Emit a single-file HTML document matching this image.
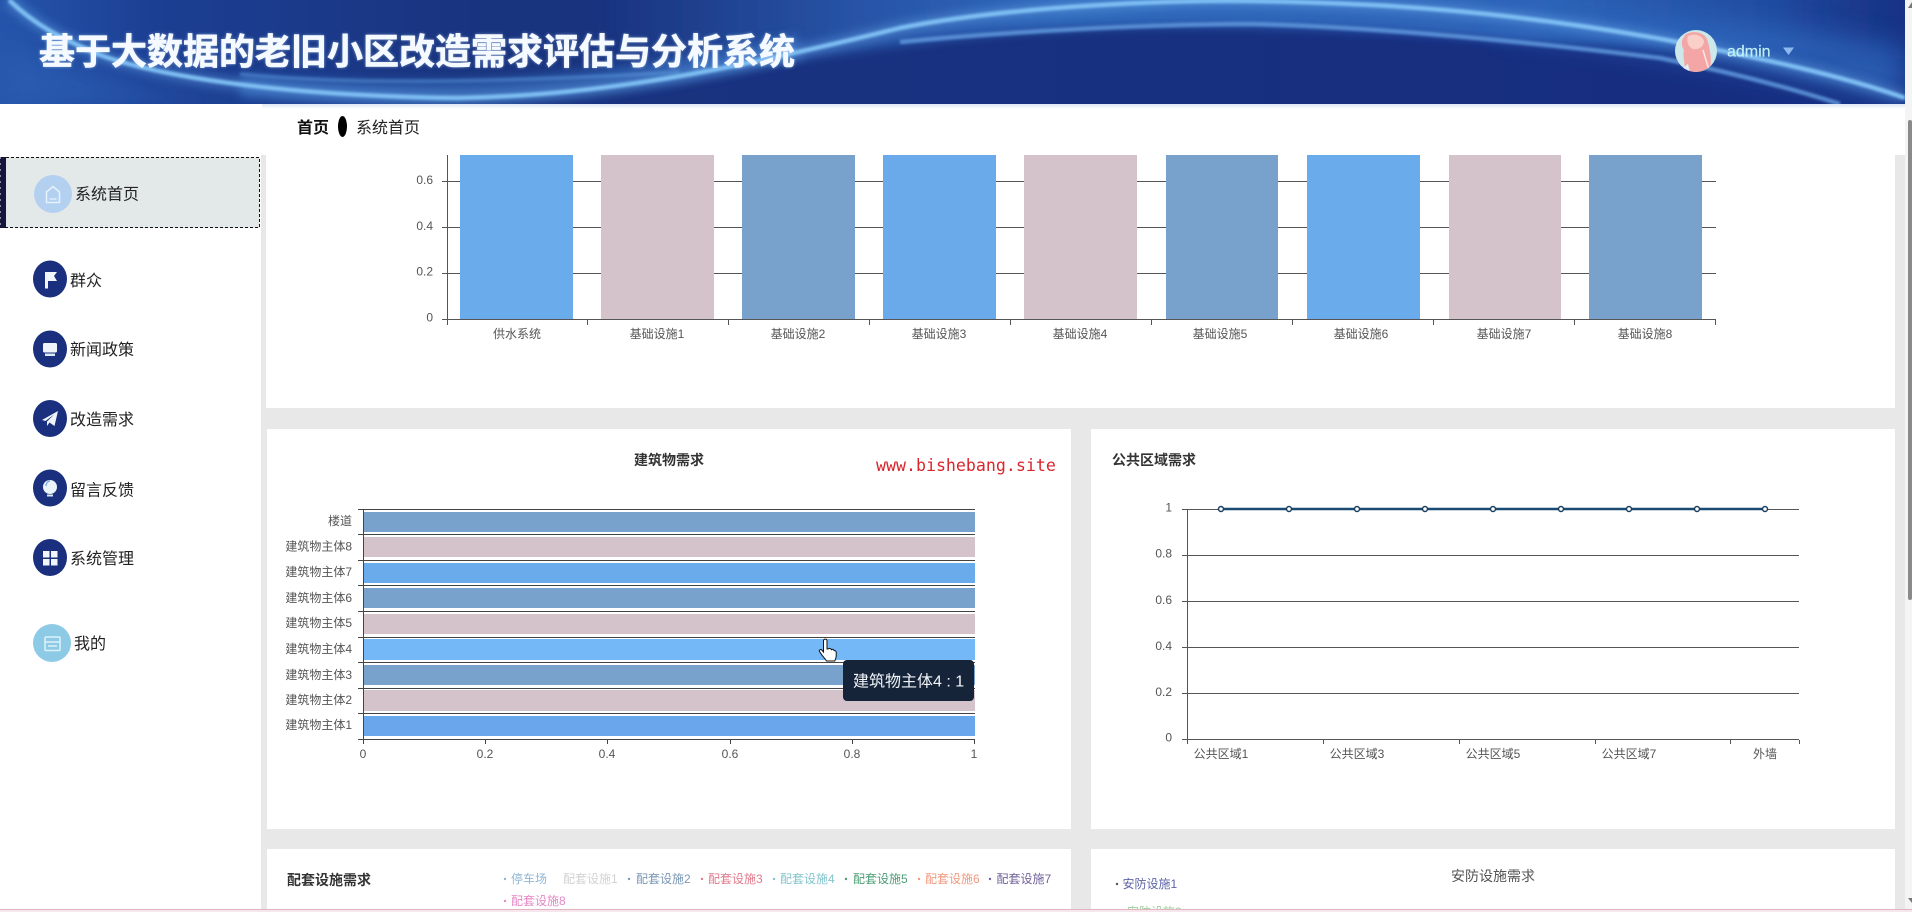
<!DOCTYPE html>
<html lang="zh"><head><meta charset="utf-8"><title>基于大数据的老旧小区改造需求评估与分析系统</title>
<style>
html,body{margin:0;padding:0;width:1912px;height:912px;overflow:hidden;background:#fff;font-family:"Liberation Sans","Noto Sans CJK SC",sans-serif}
.a{position:absolute}
.card{position:absolute;background:#fff}
svg text{font-family:"Liberation Sans","Noto Sans CJK SC",sans-serif}
</style></head><body>
<div class="a" style="left:261px;top:155px;width:644px;height:757px;background:#e8e8e8"></div>
<div class="a" style="left:1895px;top:155px;width:10px;height:757px;background:#e8e8e8"></div>
<div class="card" style="left:266px;top:104px;width:1629px;height:304px"></div>
<div class="a" style="left:266px;top:408px;width:1629px;height:504px;background:#e8e8e8"></div>
<div class="card" style="left:267px;top:429px;width:804px;height:400px"></div>
<div class="card" style="left:1091px;top:429px;width:804px;height:400px"></div>
<div class="card" style="left:267px;top:849px;width:804px;height:63px"></div>
<div class="card" style="left:1091px;top:849px;width:804px;height:63px"></div>
<div class="a" style="left:262px;top:104px;width:1643px;height:5px;background:linear-gradient(#dfe7f5,#fff)"></div>

<svg class="a" style="left:0;top:0" width="1912" height="912" viewBox="0 0 1912 912" xmlns="http://www.w3.org/2000/svg">
<defs>
<linearGradient id="hb" x1="0" x2="1" y1="0" y2="0"><stop offset="0" stop-color="#2455ab"/><stop offset=".08" stop-color="#1c3f93"/><stop offset=".25" stop-color="#19347f"/><stop offset=".7" stop-color="#182f80"/><stop offset="1" stop-color="#162e80"/></linearGradient>
<linearGradient id="hl" gradientUnits="userSpaceOnUse" x1="600" y1="0" x2="1905" y2="0"><stop offset="0" stop-color="#2c60b4" stop-opacity="0"/><stop offset=".2" stop-color="#2c60b4" stop-opacity=".75"/><stop offset=".35" stop-color="#2f67ba"/><stop offset=".72" stop-color="#2d64b8"/><stop offset=".9" stop-color="#2252a8" stop-opacity=".8"/><stop offset="1" stop-color="#1a3a8e" stop-opacity=".4"/></linearGradient>
<filter id="b1" x="-5%" y="-100%" width="110%" height="300%"><feGaussianBlur stdDeviation="1.200"/></filter>
<filter id="b2" x="-5%" y="-100%" width="110%" height="300%"><feGaussianBlur stdDeviation="5"/></filter>
<filter id="b3" x="-20%" y="-100%" width="140%" height="300%"><feGaussianBlur stdDeviation="14"/></filter>
<filter id="ts" x="-5%" y="-30%" width="110%" height="160%"><feGaussianBlur stdDeviation="1.500"/></filter>
<clipPath id="hc"><rect x="0" y="0" width="1905" height="104"/></clipPath>
<clipPath id="av"><circle cx="1696" cy="51" r="21"/></clipPath>
<clipPath id="pg"><rect x="0" y="0" width="1912" height="909"/></clipPath>
</defs>

<!-- header -->
<g clip-path="url(#hc)">
<rect width="1905" height="104" fill="url(#hb)"/>
<path d="M600 -20H1905V60C1800 45 1650 48 1500 40C1350 26 1150 20 1000 34C900 42 750 70 600 80Z" fill="url(#hl)" filter="url(#b2)"/>
<path d="M0 40C60 70 130 90 260 102L0 110Z" fill="#2a5db2" opacity=".8" filter="url(#b3)"/>
<path d="M1500 30C1620 40 1760 70 1905 100V50C1750 20 1650 10 1500 14Z" fill="#2e68bd" opacity=".8" filter="url(#b3)"/>
<path d="M240 86C420 102 600 92 800 46" stroke="#3f7fcf" stroke-width="24" fill="none" opacity=".5" filter="url(#b2)"/>
<path d="M240 74C340 84 480 84 680 72" stroke="#5d9cdf" stroke-width="4" fill="none" opacity=".45" filter="url(#b1)"/>
<path d="M9 0C35 25 60 38 100 55C170 80 300 96 457 98C600 96 730 70 900 28C1000 8 1150 0 1250 1C1380 3 1500 10 1667 40C1760 58 1840 75 1905 98" stroke="#6aa8ea" stroke-width="11" fill="none" opacity=".45" filter="url(#b2)"/>
<path d="M9 0C35 25 60 38 100 55C170 80 300 96 457 98C600 96 730 70 900 28C1000 8 1150 0 1250 1C1380 3 1500 10 1667 40C1760 58 1840 75 1905 98" stroke="#7fc0f4" stroke-width="4.500" fill="none" filter="url(#b1)"/>
<path d="M900 42C1000 32 1150 24 1250 24C1350 26 1500 38 1660 58C1730 72 1790 88 1840 104" stroke="#6199dd" stroke-width="4.500" fill="none" opacity=".85" filter="url(#b1)"/>
</g>
<text x="39" y="64" font-size="36" font-weight="700" fill="#cfe8ff" opacity=".6" filter="url(#ts)">基于大数据的老旧小区改造需求评估与分析系统</text>
<text x="39" y="64" font-size="36" font-weight="700" fill="#f4faff" stroke="#f4faff" stroke-width=".6">基于大数据的老旧小区改造需求评估与分析系统</text>

<!-- avatar -->
<g clip-path="url(#av)">
<rect x="1675" y="30" width="42" height="42" fill="#cde8ea"/>
<path d="M1686 34C1694 30 1706 32 1708 42C1710 50 1712 60 1710 68C1704 74 1692 74 1684 70C1686 62 1682 58 1684 50C1680 44 1682 38 1686 34Z" fill="#f4a6a6"/>
<path d="M1688 36C1694 33 1702 35 1704 41C1704 47 1698 50 1693 49C1688 47 1686 41 1688 36Z" fill="#f9cfc8"/>
<path d="M1703 50L1709 70" stroke="#fbe6e0" stroke-width="1.500"/>
<path d="M1680 70L1690 72L1688 64Z" fill="#e6ecf8"/>
</g>
<text x="1727" y="56.500" font-size="16" fill="#bff0f5" stroke="#bff0f5" stroke-width=".2">admin</text>
<path d="M1783 47.500H1794L1788.500 55Z" fill="#8db8f0"/>

<!-- scrollbar -->
<rect x="1905" y="0" width="7" height="912" fill="#f4f4f4"/>
<path d="M1908 8L1912 2V8Z" fill="#777"/>
<rect x="1908" y="120" width="4" height="480" rx="2" fill="#8a8a8a"/>
<path d="M1908 898H1912V903Z" fill="#777"/>

<!-- breadcrumb -->
<text x="297" y="133" font-size="16" font-weight="700" fill="#111">首页</text>
<ellipse cx="342.500" cy="126.500" rx="4.500" ry="10.500" fill="#000"/>
<text x="356" y="133" font-size="16" fill="#222">系统首页</text>

<!-- sidebar -->
<rect x="0" y="157" width="6" height="71" fill="#15163c"/>
<rect x="6" y="157" width="254" height="71" fill="#e3e8e8"/>
<path d="M6 157.500H259.500V227.500H6" fill="none" stroke="#111" stroke-width="1" stroke-dasharray="3 2"/>
<path d="M0 157V228" stroke="#fff" stroke-width="1" stroke-dasharray="2 4"/>
<circle cx="53" cy="194" r="19" fill="#b4d0f0"/>
<path d="M46.500 192L53 186.500L59.500 192V202.500H46.500Z" fill="none" stroke="#e4f2fc" stroke-width="1.500"/>
<path d="M49.500 199H56.500" stroke="#e4f2fc" stroke-width="1.300"/>
<text x="75" y="199.500" font-size="16" fill="#222">系统首页</text>

<g fill="#1a2f7d">
<ellipse cx="50" cy="279" rx="17" ry="18.500"/>
<ellipse cx="50" cy="349" rx="17" ry="18.500"/>
<ellipse cx="50" cy="418.500" rx="17" ry="18.500"/>
<ellipse cx="50" cy="488" rx="17" ry="18.500"/>
<ellipse cx="50" cy="557.500" rx="17" ry="18.500"/>
</g>
<path d="M45 272H57L54 276L57 281H48V288.500H45Z" fill="#f0f6fb"/>
<path d="M44.500 343H55.500Q57 343 57 344.500V351Q57 352.500 55.500 352.500H44.500Q43 352.500 43 351V344.500Q43 343 44.500 343Z" fill="#eef4fa"/>
<rect x="45" y="353.500" width="10" height="2.500" fill="#dce8f4"/>
<path d="M42 420L58 411L54.500 426L49.500 422.500L47 426V421.500L54 414.500L45.500 421Z" fill="#eef4fa"/>
<circle cx="50" cy="487" r="7" fill="#eaf2fa"/>
<path d="M46 486C46 483 48 481 50 481" stroke="#6f9fdc" stroke-width="1.200" fill="none"/>
<rect x="47" y="494.500" width="6" height="2" fill="#dde8f4"/>
<g fill="#f0f6fb"><rect x="43" y="551" width="6.500" height="6.500"/><rect x="51" y="551" width="6.500" height="6.500"/><rect x="43" y="559" width="6.500" height="6.500"/><rect x="51" y="559" width="6.500" height="6.500"/></g>
<ellipse cx="52" cy="643" rx="19" ry="19" fill="#8ccae6"/>
<rect x="45" y="637" width="15" height="13.500" rx="1" fill="none" stroke="#dff2f8" stroke-width="1.500"/>
<path d="M45 642H60M48 646H57" stroke="#dff2f8" stroke-width="1.500"/>
<g font-size="16" fill="#222">
<text x="70" y="286">群众</text>
<text x="70" y="355">新闻政策</text>
<text x="70" y="425">改造需求</text>
<text x="70" y="495.500">留言反馈</text>
<text x="70" y="564">系统管理</text>
<text x="74" y="649">我的</text>
</g>

<!-- top chart -->
<g stroke="#555" stroke-width="1" fill="none" shape-rendering="crispEdges">
<path d="M442 181.500H1716M442 227.500H1716M442 273.500H1716"/>
<path d="M447.500 155V325M442 319.500H1716"/>
<path d="M587.500 320V325M728.500 320V325M869.500 320V325M1010.500 320V325M1151.500 320V325M1292.500 320V325M1433.500 320V325M1574.500 320V325M1715.500 320V325"/>
</g>
<g>
<rect x="460" y="155" width="113" height="164" fill="#6aabeb"/>
<rect x="601" y="155" width="113" height="164" fill="#d5c3cb"/>
<rect x="742" y="155" width="113" height="164" fill="#78a1cb"/>
<rect x="883" y="155" width="113" height="164" fill="#6aa9ea"/>
<rect x="1024" y="155" width="113" height="164" fill="#d5c3cb"/>
<rect x="1166" y="155" width="112" height="164" fill="#78a1cb"/>
<rect x="1307" y="155" width="113" height="164" fill="#6aabeb"/>
<rect x="1449" y="155" width="112" height="164" fill="#d5c3cb"/>
<rect x="1589" y="155" width="113" height="164" fill="#78a1cb"/>
</g>
<g font-size="12" fill="#555" text-anchor="end">
<text x="433" y="184">0.6</text><text x="433" y="230">0.4</text><text x="433" y="275.500">0.2</text><text x="433" y="321.500">0</text>
</g>
<g font-size="12" fill="#555" text-anchor="middle">
<text x="517" y="338">供水系统</text><text x="657" y="338">基础设施1</text><text x="798" y="338">基础设施2</text><text x="939" y="338">基础设施3</text><text x="1080" y="338">基础设施4</text><text x="1220" y="338">基础设施5</text><text x="1361" y="338">基础设施6</text><text x="1504" y="338">基础设施7</text><text x="1645" y="338">基础设施8</text>
</g>

<!-- bar chart -->
<text x="669" y="465" font-size="14" font-weight="700" fill="#333" text-anchor="middle">建筑物需求</text>
<text x="876" y="471" font-size="16.600" fill="#d8262c" style="font-family:'DejaVu Sans Mono','Liberation Mono',monospace">www.bishebang.site</text>
<g stroke="#444" stroke-width="1" fill="none" shape-rendering="crispEdges">
<path d="M358 509.500H975M358 534.500H975M358 560.500H975M358 585.500H975M358 611.500H975M358 637.500H975M358 662.500H975M358 688.500H975M358 713.500H975M358 739.500H975"/>
<path d="M363.500 509V744M485.500 740V744M607.500 740V744M730.500 740V744M852.500 740V744M974.500 740V744"/>
</g>
<g>
<rect x="364" y="512" width="611" height="20" fill="#78a1cb"/>
<rect x="364" y="537" width="611" height="20" fill="#d5c3cb"/>
<rect x="364" y="563" width="611" height="20" fill="#6aabeb"/>
<rect x="364" y="588" width="611" height="20" fill="#78a1cb"/>
<rect x="364" y="614" width="611" height="20" fill="#d5c3cb"/>
<rect x="364" y="639" width="611" height="21" fill="#74b8f8"/>
<rect x="364" y="665" width="611" height="20" fill="#78a1cb"/>
<rect x="364" y="690" width="611" height="21" fill="#d5c3cb"/>
<rect x="364" y="716" width="611" height="20" fill="#6aa6ec"/>
</g>
<g font-size="12" fill="#555" text-anchor="end">
<text x="352" y="525">楼道</text><text x="352" y="550.500">建筑物主体8</text><text x="352" y="576">建筑物主体7</text><text x="352" y="602">建筑物主体6</text><text x="352" y="627">建筑物主体5</text><text x="352" y="653">建筑物主体4</text><text x="352" y="679">建筑物主体3</text><text x="352" y="704">建筑物主体2</text><text x="352" y="729">建筑物主体1</text>
</g>
<g font-size="12" fill="#555" text-anchor="middle">
<text x="363" y="758">0</text><text x="485" y="758">0.2</text><text x="607" y="758">0.4</text><text x="730" y="758">0.6</text><text x="852" y="758">0.8</text><text x="974" y="758">1</text>
</g>
<rect x="843" y="660" width="131" height="41" rx="4" fill="#16243a"/>
<text x="853" y="686.500" font-size="16" fill="#f2f5f8">建筑物主体4 : 1</text>
<path d="M823.500 641C823.500 638.500 827 638.500 827 641V649L828 649C829 648 830.800 648 831.300 649.700C832.300 649 833.800 649.300 834.200 650.700C835.200 650.300 836.200 651 836.200 652.300V656C836.200 658 835.300 659 834.800 661H826.500C825.500 659 824 657.800 822 655.200L819.500 651.500C818.700 650 820.700 648.800 821.800 650L823.500 652Z" fill="#fff" stroke="#111" stroke-width="1"/>

<!-- line chart -->
<text x="1112" y="465" font-size="14" font-weight="700" fill="#333">公共区域需求</text>
<g stroke="#555" stroke-width="1" fill="none" shape-rendering="crispEdges">
<path d="M1182 509.500H1799M1182 555.500H1799M1182 601.500H1799M1182 647.500H1799M1182 693.500H1799"/>
<path d="M1187.500 509V744M1182 739.500H1799M1323.500 740V744M1459.500 740V744M1595.500 740V744M1730.500 740V744M1799.500 740V744"/>
</g>
<path d="M1221 509H1765" stroke="#1a4a72" stroke-width="2.500"/>
<g fill="#fff" stroke="#1c3f60" stroke-width="1.500">
<circle cx="1221" cy="509" r="2.500"/><circle cx="1289" cy="509" r="2.500"/><circle cx="1357" cy="509" r="2.500"/><circle cx="1425" cy="509" r="2.500"/><circle cx="1493" cy="509" r="2.500"/><circle cx="1561" cy="509" r="2.500"/><circle cx="1629" cy="509" r="2.500"/><circle cx="1697" cy="509" r="2.500"/><circle cx="1765" cy="509" r="2.500"/>
</g>
<g font-size="12" fill="#555" text-anchor="end">
<text x="1172" y="511.500">1</text><text x="1172" y="557.500">0.8</text><text x="1172" y="604">0.6</text><text x="1172" y="650">0.4</text><text x="1172" y="696">0.2</text><text x="1172" y="741.500">0</text>
</g>
<g font-size="12" fill="#555" text-anchor="middle">
<text x="1221" y="758">公共区域1</text><text x="1357" y="758">公共区域3</text><text x="1493" y="758">公共区域5</text><text x="1629" y="758">公共区域7</text><text x="1765" y="758">外墙</text>
</g>

<!-- bottom cards -->
<g clip-path="url(#pg)">
<text x="287" y="885" font-size="14" font-weight="700" fill="#333">配套设施需求</text>
<g font-size="12">
<text x="511" y="883" fill="#8fb6d6">停车场</text>
<text x="563" y="883" fill="#d2d2d2">配套设施1</text>
<text x="636" y="883" fill="#7a98b4">配套设施2</text>
<text x="708" y="883" fill="#e07a8c">配套设施3</text>
<text x="780" y="883" fill="#83c4cc">配套设施4</text>
<text x="853" y="883" fill="#4c9c74">配套设施5</text>
<text x="925" y="883" fill="#f2997e">配套设施6</text>
<text x="996.500" y="883" fill="#71629a">配套设施7</text>
<text x="511" y="905" fill="#e488c6">配套设施8</text>
</g>
<g>
<circle cx="505" cy="879" r="1.200" fill="#8fb6d6"/><circle cx="629" cy="879" r="1.200" fill="#7a98b4"/><circle cx="702" cy="879" r="1.200" fill="#e07a8c"/><circle cx="774" cy="879" r="1.200" fill="#83c4cc"/><circle cx="846" cy="879" r="1.200" fill="#4c9c74"/><circle cx="919" cy="879" r="1.200" fill="#f2997e"/><circle cx="990" cy="879" r="1.200" fill="#71629a"/><circle cx="505" cy="901" r="1.200" fill="#e488c6"/>
</g>
<text x="1493" y="881" font-size="14" fill="#555" text-anchor="middle">安防设施需求</text>
<circle cx="1117" cy="884" r="1.200" fill="#555"/>
<text x="1122.500" y="888" font-size="12" fill="#5f64a8">安防设施1</text>
<text x="1127" y="916" font-size="12" fill="#9ccf9c">安防设施2</text>
</g>
<rect x="0" y="909" width="1912" height="3" fill="#f7e6eb"/>
<rect x="0" y="909" width="1912" height="1" fill="#dfb4c1"/>
</svg>
</body></html>
